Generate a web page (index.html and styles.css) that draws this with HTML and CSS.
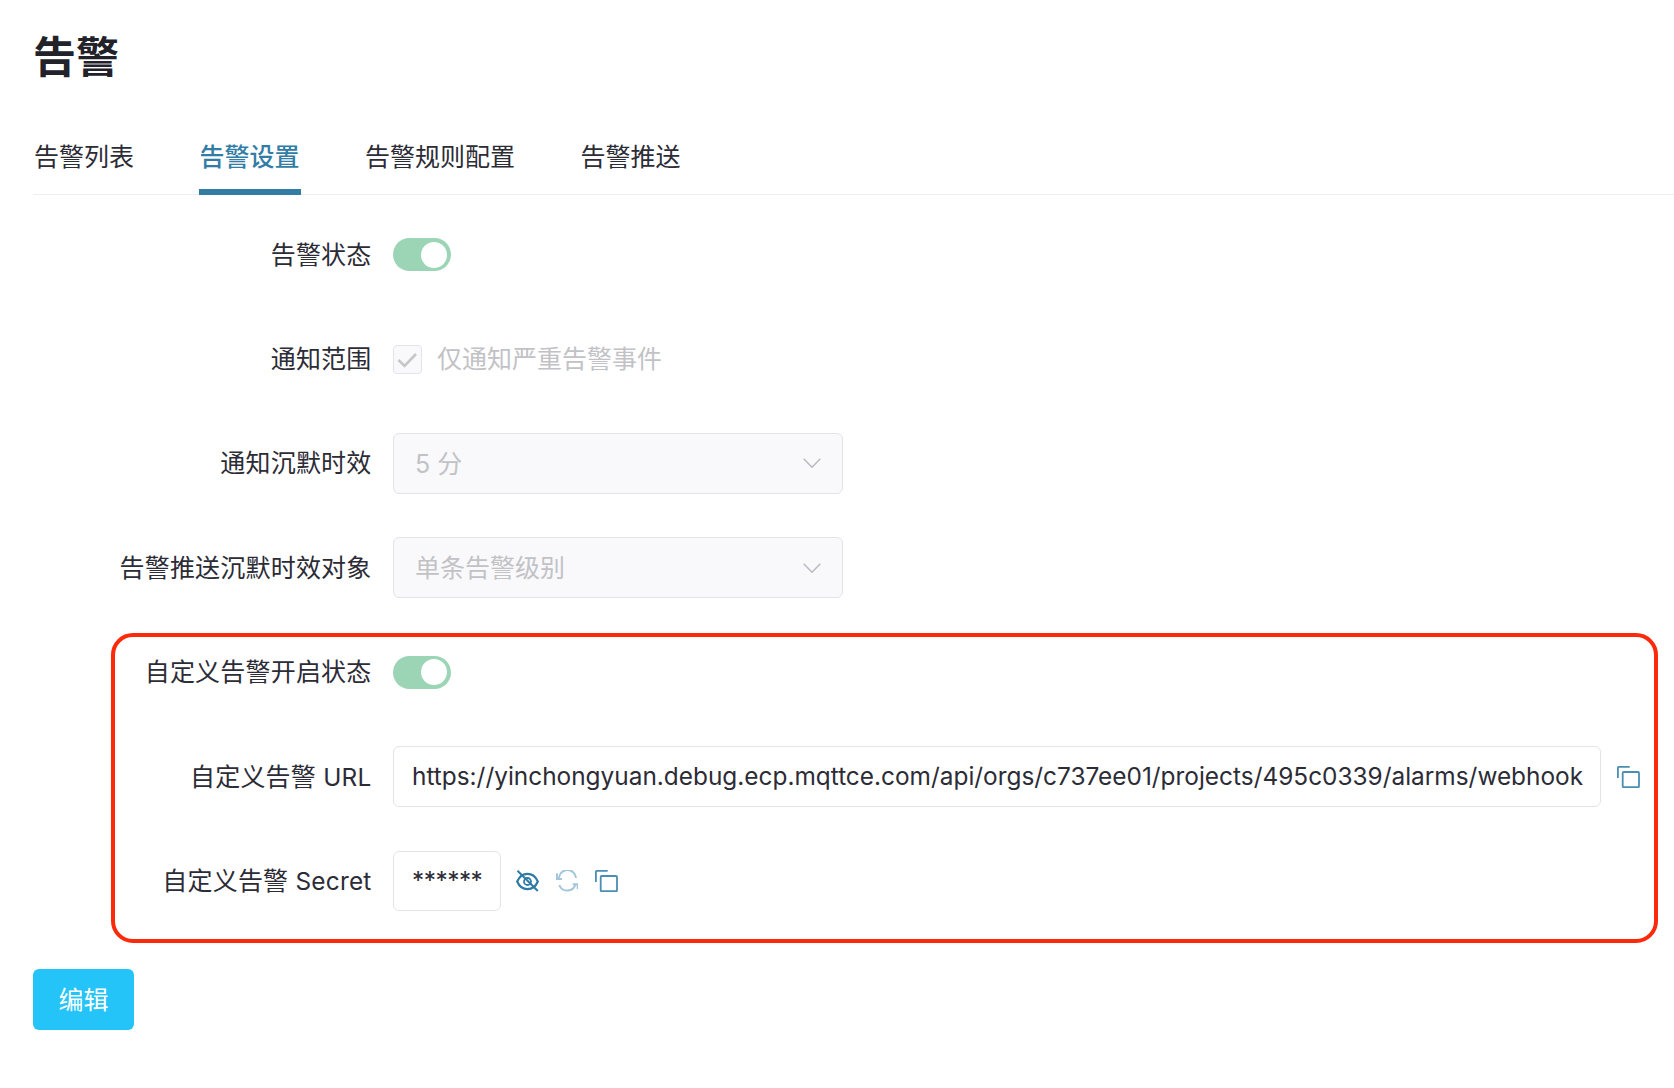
FILE: index.html
```html
<!DOCTYPE html>
<html lang="zh-CN">
<head>
<meta charset="utf-8">
<title>告警</title>
<link rel="stylesheet" href="styles.css">
</head>
<body>
<main class="page">
  <h1 class="title">告警</h1>
  <nav class="tabs">
    <a class="tab">告警列表</a>
    <a class="tab tab-active">告警设置</a>
    <a class="tab">告警规则配置</a>
    <a class="tab">告警推送</a>
  </nav>
  <form class="form">
    <div class="row">
      <label class="label">告警状态</label>
      <div class="control"><span class="switch"><span class="knob"></span></span></div>
    </div>
    <div class="row">
      <label class="label">通知范围</label>
      <div class="control">
        <span class="checkbox">
          <svg viewBox="0 0 29 29" width="29" height="29"><path d="M5.500 15l6 6 11.500-12" fill="none" stroke="#c6c6ca" stroke-width="2.600"/></svg>
        </span>
        <span class="check-text">仅通知严重告警事件</span>
      </div>
    </div>
    <div class="row">
      <label class="label">通知沉默时效</label>
      <div class="control">
        <div class="select"><span class="select-text">5 分</span>
          <svg class="chevron" viewBox="0 0 18 10" width="18" height="10"><path d="M.7.7L9 9.2 17.3.7" fill="none" stroke="#b9b9c2" stroke-width="1.500"/></svg>
        </div>
      </div>
    </div>
    <div class="row">
      <label class="label">告警推送沉默时效对象</label>
      <div class="control">
        <div class="select"><span class="select-text">单条告警级别</span>
          <svg class="chevron" viewBox="0 0 18 10" width="18" height="10"><path d="M.7.7L9 9.2 17.3.7" fill="none" stroke="#b9b9c2" stroke-width="1.500"/></svg>
        </div>
      </div>
    </div>
    <section class="custom">
      <div class="highlight"></div>
      <div class="row">
        <label class="label">自定义告警开启状态</label>
        <div class="control"><span class="switch"><span class="knob"></span></span></div>
      </div>
      <div class="row">
        <label class="label">自定义告警 <span class="latin">URL</span></label>
        <div class="control">
          <div class="input input-url">https://yinchongyuan.debug.ecp.mqttce.com/api/orgs/c737ee01/projects/495c0339/alarms/webhook</div>
          <svg class="icon copy-url" viewBox="0 0 23 22" width="23" height="22"><path d="M.9 12V1.700Q.9.9 1.700.9H12.700" fill="none" stroke="#4a8eb3" stroke-width="1.800"/><rect x="5.700" y="6" width="16.300" height="15.200" rx="1" fill="none" stroke="#4a8eb3" stroke-width="1.800"/></svg>
        </div>
      </div>
      <div class="row">
        <label class="label">自定义告警 <span class="latin">Secret</span></label>
        <div class="control">
          <div class="input input-secret">******</div>
          <div class="icons">
            <svg class="icon" viewBox="0 0 23 22" width="23" height="22"><path d="M1.200 11.500C3.500 6 7 3.800 11.500 3.800S19.500 6 21.800 11.500C19.500 17 16 19.200 11.500 19.200S3.500 17 1.200 11.500Z" fill="none" stroke="#2f7ba5" stroke-width="2.200"/><circle cx="11.500" cy="11.500" r="3.500" fill="none" stroke="#2f7ba5" stroke-width="1.800"/><path d="M1.500.8L21.800 21" fill="none" stroke="#2f7ba5" stroke-width="2"/></svg>
            <svg class="icon" viewBox="0 0 22 22" width="22" height="22"><path d="M3 9A8.500 8.500 0 0 1 20 8M19.500 14.300A8.500 8.500 0 0 1 3.300 15" fill="none" stroke="#a3c6da" stroke-width="2"/><path d="M.9 3.300V9H6M16.700 14.300H21.700V19" fill="none" stroke="#a3c6da" stroke-width="2"/></svg>
            <svg class="icon" viewBox="0 0 23 22" width="23" height="22"><path d="M.9 12V1.700Q.9.9 1.700.9H12.700" fill="none" stroke="#4a8eb3" stroke-width="1.800"/><rect x="5.700" y="6" width="16.300" height="15.200" rx="1" fill="none" stroke="#4a8eb3" stroke-width="1.800"/></svg>
          </div>
        </div>
      </div>
    </section>
    <button type="button" class="button"><span class="button-text">编辑</span></button>
  </form>
</main>
</body>
</html>
```
FILE: styles.css
```css
* { box-sizing: border-box; }
html, body { margin: 0; background: #fff; }
body {
  font-family: Inter, "Noto Sans CJK SC", sans-serif;
  font-size: 25px;
  color: #2c2c36;
}
.page { padding: 32px 0 0 33px; height: 1088px; overflow: hidden; }
.title {
  margin: 0 0 37px;
  font-size: 43px;
  line-height: 50px;
  font-weight: 700;
  color: #22222a;
}
.tabs {
  display: flex;
  gap: 63.5px;
  height: 76px;
  border-bottom: 1px solid #eeeef2;
}
.tab {
  height: 76px;
  line-height: 76px;
  padding: 0 1px;
  color: #2c2c36;
}
.tab-active {
  color: #327da6;
  font-weight: 500;
  border-bottom: 6px solid #327da6;
}
.form { padding-top: 29.2px; }
.row {
  display: flex;
  align-items: center;
  height: 61px;
  margin-bottom: 43.4px;
}
.label {
  flex: none;
  width: 338.5px;
  padding-bottom: 4px;
  text-align: right;
  white-space: nowrap;
  letter-spacing: 0.2px;
}
.latin { font-size: 24.4px; }
.control {
  display: flex;
  align-items: center;
  margin-left: 21.5px;
}
.switch {
  display: flex;
  align-items: center;
  justify-content: flex-end;
  width: 58px;
  height: 33px;
  padding-right: 4px;
  border-radius: 17px;
  background: #9bd5b5;
}
.knob {
  width: 26px;
  height: 26px;
  border-radius: 50%;
  background: #fff;
}
.checkbox {
  display: block;
  width: 29px;
  height: 29px;
  border: 1px solid #e3e3ec;
  border-radius: 4px;
  background: #f9f9fb;
}
.checkbox svg { display: block; margin: -1px; }
.check-text { margin-left: 15px; padding-bottom: 4px; color: #c2c2c6; }
.select {
  display: flex;
  align-items: center;
  justify-content: space-between;
  width: 450px;
  height: 61px;
  padding: 0 21px 0 21px;
  border: 1px solid #e3e3ec;
  border-radius: 6px;
  background: #f9f9fb;
  color: #c2c2c6;
}
.select-text { padding-bottom: 3px; }
.input {
  display: flex;
  align-items: center;
  height: 61px;
  border: 1px solid #e3e3ec;
  border-radius: 6px;
  white-space: nowrap;
  font-size: 24.4px;
}
.input-url { width: 1208px; padding: 0 0 2px 18px; }
.input-secret { width: 108px; height: 60px; padding: 0 0 2px 18px; letter-spacing: -0.5px; }
.icon { display: block; flex: none; }
.copy-url { margin-left: 16px; }
.icons {
  display: flex;
  align-items: center;
  gap: 17px;
  margin-left: 15px;
}
.custom { position: relative; }
.highlight {
  position: absolute;
  top: -9px;
  left: 78px;
  right: 16px;
  bottom: -31px;
  border: 4px solid #fa2a0a;
  border-radius: 22px;
  pointer-events: none;
}
.button {
  display: block;
  width: 101px;
  height: 61px;
  margin-top: 57px;
  padding: 0 0 3px;
  border: 0;
  border-radius: 6px;
  background: #24c4f8;
  color: #fff;
  font: inherit;
}
```
